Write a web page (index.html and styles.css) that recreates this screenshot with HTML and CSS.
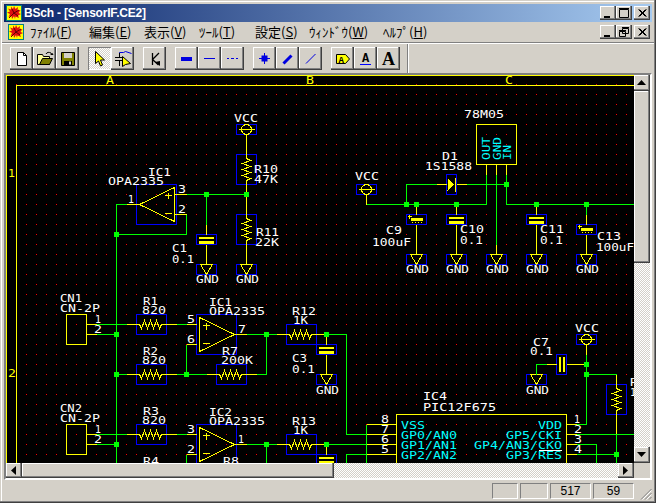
FILE: index.html
```html
<!DOCTYPE html>
<html lang="ja">
<head>
<meta charset="utf-8">
<title>BSch - [SensorIF.CE2]</title>
<link rel="stylesheet" href="styles.css">
</head>
<body>
<svg class="defs" width="0" height="0">
  <defs>
    <symbol id="leaf" viewBox="0 0 16 16">
      <rect x="0" y="0" width="16" height="16" fill="#ffff00"/>
      <rect x=".5" y=".5" width="15" height="15" fill="none" stroke="#008080"/>
      <path d="M8 1l1.500 3 2.500-2-.5 3.500 3-.5-2 3 2.500 1-3 1.500 1 2.500-3.500-1.500L9 14 8 11l-2 3-.5-3-3 1 1.500-3-3-1.500 3-1-2-3 3 1L5 1.500 7 4z" fill="#e01010"/>
      <path d="M3 13L8 8l5-3M8 8l-2-4M8 8l4 3" stroke="#600000" fill="none"/>
    </symbol>
    <g id="gnd"><rect x="-10" y="0" width="20" height="10" class="bl"/><path d="M-6 0H6L0 10Z" class="ye"/></g>
    <g id="vcc"><rect x="-10" y="0" width="20" height="10" class="bl"/><ellipse cx="0" cy="5" rx="5" ry="5" class="ye"/><path d="M-8 5H8" class="ye"/></g>
    <g id="rh"><rect x="0" y="0" width="30" height="20" class="bl"/><path d="M0 10H3L5 14 8 6 11 14 14 6 17 14 20 6 23 14 25 10H30" class="ye"/></g>
    <g id="rv"><rect x="0" y="0" width="20" height="30" class="bl"/><path d="M10 0V4L14 6 6 9 14 12 6 15 14 18 6 21 14 24 10 26V30" class="ye"/></g>
    <g id="cap"><rect x="-10" y="0" width="20" height="10" class="bl"/><rect x="-7.500" y="2" width="15" height="2.500" class="fy"/><rect x="-7.500" y="6.500" width="15" height="2.500" class="fy"/></g>
    <g id="pcap"><rect x="-10" y="0" width="20" height="10" class="bl"/><path d="M-9 2H-5M-7 0V4" class="ye"/><rect x="-5.500" y="3" width="12" height="2" class="fy"/><path d="M-6 6H6M-4 7.500V8.500M-1 7.500V8.500M2 7.500V8.500M5 7.500V8.500" class="ye"/></g>
    <g id="op"><rect x="0" y="0" width="40" height="40" class="bl"/><path d="M3 3V37L38 20Z M6 11H13M9.500 8V15M6 29H13" class="ye"/></g>
    <rect id="j" x="-2.500" y="-2.500" width="5" height="5" class="fg"/>
  </defs>
</svg>
<div class="window">
  <header class="titlebar">
    <svg class="ico16" width="16" height="16"><use href="#leaf"/></svg>
    <span class="titletext">BSch - [SensorIF.CE2]</span>
    <div class="winbtns">
      <button class="wb"><svg width="14" height="12"><path d="M3 9h6v2H3z"/></svg></button>
      <button class="wb"><svg width="14" height="12"><path d="M2.500 2.500h9v8h-9z M2 1.500h10" class="glyphline"/></svg></button>
      <button class="wb wb-close"><svg width="14" height="12"><path d="M3.500 2.500l7 7M4.500 2.500l7 7M10.500 2.500l-7 7M11.500 2.500l-7 7" class="glyphline"/></svg></button>
    </div>
  </header>
  <nav class="menubar">
    <svg class="ico16 menuicon" width="16" height="16"><use href="#leaf"/></svg>
    <span class="mi m1">ﾌｧｲﾙ(<u>F</u>)</span>
    <span class="mi m2">編集(<u>E</u>)</span>
    <span class="mi m3">表示(<u>V</u>)</span>
    <span class="mi m4">ﾂｰﾙ(<u>T</u>)</span>
    <span class="mi m5">設定(<u>S</u>)</span>
    <span class="mi m6">ｳｨﾝﾄﾞｳ(<u>W</u>)</span>
    <span class="mi m7">ﾍﾙﾌﾟ(<u>H</u>)</span>
    <div class="winbtns mdibtns">
      <button class="wb"><svg width="14" height="12"><path d="M3 9h6v2H3z"/></svg></button>
      <button class="wb"><svg width="14" height="12"><path d="M5.500 2.500h6v5h-6z M5 1.500h7 M2.500 5.500h6v5h-6z M2 4.500h7" class="glyphline"/></svg></button>
      <button class="wb wb-close"><svg width="14" height="12"><path d="M3.500 2.500l7 7M4.500 2.500l7 7M10.500 2.500l-7 7M11.500 2.500l-7 7" class="glyphline"/></svg></button>
    </div>
  </nav>
  <div class="rule"></div>
  <div class="toolbar">
    <div class="tgroup">
      <button class="tb"><svg width="16" height="16"><path d="M3.500 1.500h6l3 3v10h-9z" fill="#fff" stroke="#000"/><path d="M9.500 1.500v3h3" fill="none" stroke="#000"/></svg></button>
      <button class="tb"><svg width="18" height="16"><path d="M1.500 3.500h5l1 2h6v8h-12z" fill="#ffff99" stroke="#000"/><path d="M3.500 13.500l3-6h10l-3 6z" fill="#808000" stroke="#000"/><path d="M10 3c1-2 3-2 5-1l1 2" fill="none" stroke="#000"/><path d="M14 4h3.500l-1-2z"/></svg></button>
      <button class="tb"><svg width="16" height="16"><path d="M1.500 1.500h13v13h-13z" fill="#808000" stroke="#000"/><rect x="4" y="2" width="8" height="5" fill="#d4d0c8"/><rect x="4" y="10" width="8" height="4" fill="#000"/><rect x="9" y="10.500" width="2" height="3" fill="#d4d0c8"/></svg></button>
    </div>
    <div class="tgroup">
      <button class="tb tb-on"><svg width="16" height="18"><path d="M3.500 1.500v12l3-2.500 2 5 2-1-2-5h4z" fill="#ffff00" stroke="#000"/></svg></button>
      <button class="tb"><svg width="20" height="18"><path d="M6.500 3V2.500h4l2-1 6 2" fill="none" stroke="#0000e0"/><path d="M6.500 3v4M6.500 11v5M2 7.500h9M2 10.500h9" stroke="#000" fill="none"/><path d="M9.500 6.500v10l3-2 5-1z" fill="#ffff00" stroke="#000"/></svg></button>
    </div>
    <div class="tgroup">
      <button class="tb"><svg width="16" height="16"><path d="M5.500 2v12M12 2L5.500 8.500l6 5.500" stroke="#000" fill="none" stroke-width="1.300"/><path d="M8 11l5 4v-5z"/></svg></button>
    </div>
    <div class="tgroup">
      <button class="tb"><svg width="16" height="16"><rect x="2" y="6" width="11" height="4" fill="#0000e0"/></svg></button>
      <button class="tb"><svg width="16" height="16"><rect x="2" y="7" width="11" height="1" fill="#0000e0"/></svg></button>
      <button class="tb"><svg width="16" height="16"><path d="M2 7.500h2M6 7.500h3M11 7.500h2" stroke="#0000e0"/></svg></button>
    </div>
    <div class="tgroup">
      <button class="tb"><svg width="16" height="16"><rect x="4.500" y="4.500" width="6" height="6" fill="#0000e0"/><path d="M7.500 2v11M2 7.500h11" stroke="#0000e0"/></svg></button>
      <button class="tb"><svg width="16" height="16"><path d="M3.500 12.500L11.500 4.500" stroke="#0000e0" stroke-width="3"/></svg></button>
      <button class="tb"><svg width="16" height="16"><path d="M3 12.500L12.500 3" stroke="#0000e0"/></svg></button>
    </div>
    <div class="tgroup">
      <button class="tb"><svg width="16" height="12"><path d="M1.500 1.500h9l4 4.500-4 4.500h-9z" fill="#ffff00" stroke="#000"/><text x="3.500" y="9.500" class="iconA">A</text></svg></button>
      <button class="tb"><svg width="16" height="18"><text x="7.500" y="12" text-anchor="middle" class="iconB">A</text><rect x="2" y="14" width="11" height="1" fill="#0000ff"/></svg></button>
      <button class="tb"><svg width="16" height="16"><text x="7.500" y="14" text-anchor="middle" class="iconC">A</text></svg></button>
    </div>
    <div class="tsep"></div>
  </div>
  <main class="client">
    <div class="canvas">
      <svg class="sch" width="628" height="388" viewBox="6 75 628 388">
        <g transform="translate(.5 .5)" class="crisp">
          <path d="M634 75H6V463M634 85H16V463" class="ye"/>

          <!-- symbols -->
          <use href="#vcc" x="246" y="124"/><use href="#rv" x="236" y="154"/><use href="#rv" x="236" y="214"/>
          <use href="#gnd" x="246" y="264"/><use href="#gnd" x="206" y="264"/><use href="#cap" x="206" y="234"/>
          <rect x="136" y="184" width="40" height="40" class="bl"/>
          <path d="M174 187V221L139 204Z M164 195H171M167.500 192V198M164 213H171" class="ye"/>

          <use href="#rh" x="136" y="314"/><use href="#rh" x="136" y="364"/><use href="#rh" x="136" y="424"/>
          <use href="#rh" x="216" y="364"/><use href="#rh" x="286" y="324"/><use href="#rh" x="286" y="434"/>
          <use href="#op" x="196" y="314"/><use href="#op" x="196" y="424"/>
          <rect x="66" y="314" width="20" height="30" class="ye"/><rect x="66" y="424" width="20" height="30" class="ye"/>
          <use href="#cap" x="326" y="344"/><use href="#cap" x="326" y="454"/><use href="#gnd" x="326" y="374"/>

          <use href="#vcc" x="366" y="184"/>
          <rect x="446" y="174" width="10" height="20" class="bl"/>
          <path d="M447 178V190L454 184Z" class="fy"/><path d="M455 177V191" class="ye"/>
          <use href="#pcap" x="416" y="214"/><use href="#cap" x="456" y="214"/><use href="#cap" x="536" y="214"/><use href="#pcap" x="586" y="224"/>
          <use href="#gnd" x="416" y="254"/><use href="#gnd" x="456" y="254"/><use href="#gnd" x="496" y="254"/><use href="#gnd" x="536" y="254"/><use href="#gnd" x="586" y="254"/>
          <rect x="476" y="124" width="40" height="40" class="ye"/>

          <use href="#vcc" x="586" y="334"/>
          <rect x="556" y="354" width="10" height="20" class="bl"/>
          <rect x="558.500" y="356.500" width="2" height="15" class="fy"/><rect x="562.500" y="356.500" width="2" height="15" class="fy"/>
          <use href="#gnd" x="536" y="374"/>
          <use href="#rv" x="606" y="384"/>
          <rect x="396" y="414" width="170" height="60" class="ye"/>

          <!-- yellow pin stubs -->
          <path d="M246 134V154M246 184V194M246 194V214M246 244V264M206 224V234M206 244V264M174 194H186M174 214H186M126 204H139M86 324H96M86 334H96M126 324H136M126 374H136M166 324H176M186 324H196M186 344H196M166 374H176M206 374H216M234 334H246M276 334H286M316 334H326M326 334V344M326 354V374M86 434H96M86 444H96M126 434H136M166 434H176M186 434H196M186 454H196M234 444H246M276 444H286M316 444H326M326 444V454M366 424H396M366 434H396M366 444H396M366 454H396M566 424H576M566 434H576M566 444H576M566 454H576M586 344V354M566 364H586M546 364H556M616 374V384M616 414V434M366 194V204M436 184H446M456 184H466M486 164V174M496 164V174M506 164V174M496 244V254M416 204V214M416 224V254M456 204V214M456 224V254M536 204V214M536 224V254M586 214V224M586 234V254" class="ye"/>

          <!-- green wires -->
          <path d="M186 194H246M206 194V224M186 214V234H116M126 204H116V463M96 324H126M96 334H116M116 374H126M176 324H186M176 374H206M186 344V374M246 334H276M266 334V374H256M96 434H126M96 444H116M176 434H186M186 454V463M246 444H276M266 444V463M326 334H346V434H366M326 444H366M346 463V454H366M366 463V424M576 424H586V354M586 374H616M536 374V364H546M576 434H634M576 444H596V463M576 454H616M616 434V463M366 204H486V174M406 204V184H436M466 184H506M506 174V204H634M496 174V244M586 204V214" class="gr"/>
          <path d="M256 374H246" class="ye"/>

          <use href="#j" x="246" y="194"/><use href="#j" x="206" y="194"/><use href="#j" x="116" y="234"/>
          <use href="#j" x="116" y="334"/><use href="#j" x="116" y="374"/><use href="#j" x="116" y="444"/>
          <use href="#j" x="186" y="374"/><use href="#j" x="266" y="334"/><use href="#j" x="266" y="444"/>
          <use href="#j" x="326" y="334"/><use href="#j" x="326" y="444"/><use href="#j" x="406" y="204"/>
          <use href="#j" x="416" y="204"/><use href="#j" x="456" y="204"/><use href="#j" x="506" y="184"/>
          <use href="#j" x="536" y="204"/><use href="#j" x="586" y="204"/><use href="#j" x="586" y="364"/>
          <use href="#j" x="586" y="374"/><use href="#j" x="616" y="454"/>
          <path d="M538 450H561" class="wh"/>
        </g>

        <g class="lbl ly">
          <text x="106" y="84" textLength="8" lengthAdjust="spacingAndGlyphs">A</text>
          <text x="306" y="84" textLength="8" lengthAdjust="spacingAndGlyphs">B</text>
          <text x="505" y="84" textLength="8" lengthAdjust="spacingAndGlyphs">C</text>
          <text x="8" y="177" textLength="7" lengthAdjust="spacingAndGlyphs">1</text>
          <text x="8" y="377" textLength="8" lengthAdjust="spacingAndGlyphs">2</text>
        </g>
        <g class="lbl lw">
          <text x="234" y="122" textLength="24" lengthAdjust="spacingAndGlyphs">VCC</text>
          <text x="254" y="173" textLength="24" lengthAdjust="spacingAndGlyphs">R10</text>
          <text x="254" y="183" textLength="24" lengthAdjust="spacingAndGlyphs">47K</text>
          <text x="256" y="236" textLength="23" lengthAdjust="spacingAndGlyphs">R11</text>
          <text x="255" y="246" textLength="24" lengthAdjust="spacingAndGlyphs">22K</text>
          <text x="236" y="283" textLength="23" lengthAdjust="spacingAndGlyphs">GND</text>
          <text x="196" y="283" textLength="23" lengthAdjust="spacingAndGlyphs">GND</text>
          <text x="148" y="176" textLength="23" lengthAdjust="spacingAndGlyphs">IC1</text>
          <text x="108" y="185" textLength="56" lengthAdjust="spacingAndGlyphs">OPA2335</text>
          <text x="178" y="193" textLength="8" lengthAdjust="spacingAndGlyphs">3</text>
          <text x="178" y="213" textLength="8" lengthAdjust="spacingAndGlyphs">2</text>
          <text x="128" y="203" textLength="6" lengthAdjust="spacingAndGlyphs">1</text>
          <text x="172" y="252" textLength="15" lengthAdjust="spacingAndGlyphs">C1</text>
          <text x="172" y="263" textLength="22" lengthAdjust="spacingAndGlyphs">0.1</text>

          <text x="60" y="302" textLength="22" lengthAdjust="spacingAndGlyphs">CN1</text>
          <text x="60" y="312" textLength="40" lengthAdjust="spacingAndGlyphs">CN-2P</text>
          <text x="95" y="323" textLength="6" lengthAdjust="spacingAndGlyphs">1</text>
          <text x="94" y="333" textLength="8" lengthAdjust="spacingAndGlyphs">2</text>
          <text x="143" y="305" textLength="15" lengthAdjust="spacingAndGlyphs">R1</text>
          <text x="142" y="314" textLength="24" lengthAdjust="spacingAndGlyphs">820</text>
          <text x="143" y="355" textLength="15" lengthAdjust="spacingAndGlyphs">R2</text>
          <text x="142" y="364" textLength="24" lengthAdjust="spacingAndGlyphs">820</text>
          <text x="187" y="323" textLength="8" lengthAdjust="spacingAndGlyphs">5</text>
          <text x="187" y="343" textLength="8" lengthAdjust="spacingAndGlyphs">6</text>
          <text x="209" y="306" textLength="23" lengthAdjust="spacingAndGlyphs">IC1</text>
          <text x="209" y="315" textLength="56" lengthAdjust="spacingAndGlyphs">OPA2335</text>
          <text x="238" y="333" textLength="8" lengthAdjust="spacingAndGlyphs">7</text>
          <text x="222" y="355" textLength="16" lengthAdjust="spacingAndGlyphs">R7</text>
          <text x="221" y="364" textLength="32" lengthAdjust="spacingAndGlyphs">200K</text>
          <text x="292" y="315" textLength="24" lengthAdjust="spacingAndGlyphs">R12</text>
          <text x="293" y="324" textLength="15" lengthAdjust="spacingAndGlyphs">1K</text>
          <text x="292" y="362" textLength="15" lengthAdjust="spacingAndGlyphs">C3</text>
          <text x="292" y="373" textLength="23" lengthAdjust="spacingAndGlyphs">0.1</text>
          <text x="316" y="394" textLength="23" lengthAdjust="spacingAndGlyphs">GND</text>

          <text x="60" y="412" textLength="22" lengthAdjust="spacingAndGlyphs">CN2</text>
          <text x="60" y="422" textLength="40" lengthAdjust="spacingAndGlyphs">CN-2P</text>
          <text x="95" y="433" textLength="6" lengthAdjust="spacingAndGlyphs">1</text>
          <text x="94" y="443" textLength="8" lengthAdjust="spacingAndGlyphs">2</text>
          <text x="143" y="415" textLength="16" lengthAdjust="spacingAndGlyphs">R3</text>
          <text x="142" y="424" textLength="24" lengthAdjust="spacingAndGlyphs">820</text>
          <text x="187" y="433" textLength="8" lengthAdjust="spacingAndGlyphs">3</text>
          <text x="187" y="453" textLength="8" lengthAdjust="spacingAndGlyphs">2</text>
          <text x="209" y="416" textLength="23" lengthAdjust="spacingAndGlyphs">IC2</text>
          <text x="209" y="425" textLength="56" lengthAdjust="spacingAndGlyphs">OPA2335</text>
          <text x="238" y="443" textLength="6" lengthAdjust="spacingAndGlyphs">1</text>
          <text x="292" y="425" textLength="24" lengthAdjust="spacingAndGlyphs">R13</text>
          <text x="293" y="434" textLength="15" lengthAdjust="spacingAndGlyphs">1K</text>
          <text x="143" y="465" textLength="16" lengthAdjust="spacingAndGlyphs">R4</text>
          <text x="223" y="465" textLength="16" lengthAdjust="spacingAndGlyphs">R8</text>

          <text x="464" y="118" textLength="40" lengthAdjust="spacingAndGlyphs">78M05</text>
          <text x="442" y="160" textLength="16" lengthAdjust="spacingAndGlyphs">D1</text>
          <text x="425" y="170" textLength="47" lengthAdjust="spacingAndGlyphs">1S1588</text>
          <text x="355" y="180" textLength="24" lengthAdjust="spacingAndGlyphs">VCC</text>
          <text x="386" y="234" textLength="16" lengthAdjust="spacingAndGlyphs">C9</text>
          <text x="372" y="246" textLength="39" lengthAdjust="spacingAndGlyphs">100uF</text>
          <text x="460" y="233" textLength="24" lengthAdjust="spacingAndGlyphs">C10</text>
          <text x="460" y="244" textLength="23" lengthAdjust="spacingAndGlyphs">0.1</text>
          <text x="540" y="233" textLength="24" lengthAdjust="spacingAndGlyphs">C11</text>
          <text x="540" y="244" textLength="23" lengthAdjust="spacingAndGlyphs">0.1</text>
          <text x="597" y="240" textLength="24" lengthAdjust="spacingAndGlyphs">C13</text>
          <text x="596" y="251" textLength="38" lengthAdjust="spacingAndGlyphs">100uF</text>
          <text x="406" y="273" textLength="23" lengthAdjust="spacingAndGlyphs">GND</text>
          <text x="446" y="273" textLength="23" lengthAdjust="spacingAndGlyphs">GND</text>
          <text x="486" y="273" textLength="23" lengthAdjust="spacingAndGlyphs">GND</text>
          <text x="526" y="273" textLength="23" lengthAdjust="spacingAndGlyphs">GND</text>
          <text x="576" y="273" textLength="23" lengthAdjust="spacingAndGlyphs">GND</text>

          <text x="575" y="332" textLength="24" lengthAdjust="spacingAndGlyphs">VCC</text>
          <text x="533" y="346" textLength="16" lengthAdjust="spacingAndGlyphs">C7</text>
          <text x="530" y="355" textLength="23" lengthAdjust="spacingAndGlyphs">0.1</text>
          <text x="526" y="394" textLength="23" lengthAdjust="spacingAndGlyphs">GND</text>
          <text x="630" y="386" textLength="8" lengthAdjust="spacingAndGlyphs">R</text>
          <text x="630" y="396" textLength="6" lengthAdjust="spacingAndGlyphs">1</text>

          <text x="423" y="400" textLength="24" lengthAdjust="spacingAndGlyphs">IC4</text>
          <text x="423" y="411" textLength="73" lengthAdjust="spacingAndGlyphs">PIC12F675</text>
          <text x="381" y="423" textLength="8" lengthAdjust="spacingAndGlyphs">8</text>
          <text x="381" y="433" textLength="8" lengthAdjust="spacingAndGlyphs">7</text>
          <text x="381" y="443" textLength="8" lengthAdjust="spacingAndGlyphs">6</text>
          <text x="381" y="453" textLength="8" lengthAdjust="spacingAndGlyphs">5</text>
          <text x="574" y="423" textLength="6" lengthAdjust="spacingAndGlyphs">1</text>
          <text x="574" y="433" textLength="8" lengthAdjust="spacingAndGlyphs">2</text>
          <text x="574" y="443" textLength="8" lengthAdjust="spacingAndGlyphs">3</text>
          <text x="574" y="453" textLength="8" lengthAdjust="spacingAndGlyphs">4</text>
        </g>
        <g class="lbl lc">
          <text x="401" y="429" textLength="24" lengthAdjust="spacingAndGlyphs">VSS</text>
          <text x="401" y="439" textLength="56" lengthAdjust="spacingAndGlyphs">GP0/AN0</text>
          <text x="401" y="449" textLength="56" lengthAdjust="spacingAndGlyphs">GP1/AN1</text>
          <text x="401" y="459" textLength="56" lengthAdjust="spacingAndGlyphs">GP2/AN2</text>
          <text x="538" y="429" textLength="24" lengthAdjust="spacingAndGlyphs">VDD</text>
          <text x="506" y="439" textLength="56" lengthAdjust="spacingAndGlyphs">GP5/CKI</text>
          <text x="474" y="449" textLength="88" lengthAdjust="spacingAndGlyphs">GP4/AN3/CKO</text>
          <text x="506" y="459" textLength="56" lengthAdjust="spacingAndGlyphs">GP3/RES</text>
          <text transform="translate(490 160) rotate(-90)" textLength="23" lengthAdjust="spacingAndGlyphs">OUT</text>
          <text transform="translate(500.500 160) rotate(-90)" textLength="23" lengthAdjust="spacingAndGlyphs">GND</text>
          <text transform="translate(510.500 160) rotate(-90)" textLength="15" lengthAdjust="spacingAndGlyphs">IN</text>
        </g>
      </svg>
    </div>
    <div class="vscroll">
      <button class="sb"><svg width="10" height="6"><path d="M0 5h9L4.500 0z"/></svg></button>
      <div class="vthumb"></div>
      <div class="track"></div>
      <button class="sb"><svg width="10" height="6"><path d="M0 0h9L4.500 5z"/></svg></button>
    </div>
    <div class="hscroll">
      <button class="sb sb-h"><svg width="6" height="10"><path d="M5 0v9L0 4.500z"/></svg></button>
      <div class="hthumb"></div>
      <div class="track"></div>
      <button class="sb sb-h"><svg width="6" height="10"><path d="M0 0v9L5 4.500z"/></svg></button>
    </div>
    <div class="corner"></div>
  </main>
  <footer class="statusbar">
    <div class="panel p1"></div>
    <div class="panel p2"></div>
    <div class="panel p3">517</div>
    <div class="panel p4">59</div>
    <svg class="grip" width="12" height="12"><path d="M11.500 1L1 11.500M11.500 5L5 11.500M11.500 9L9 11.500" stroke="#808080" fill="none"/><path d="M11.500 2.500L2.500 11.500M11.500 6.500L6.500 11.500" stroke="#fff" fill="none"/></svg>
  </footer>
</div>
</body>
</html>
```
FILE: styles.css
```css
* { box-sizing: border-box; }
html, body { margin: 0; padding: 0; background: #d4d0c8; overflow: hidden; }
button { padding: 0; margin: 0; font: inherit; }
.defs { position: absolute; }

.window {
  width: 656px; height: 503px;
  display: flex; flex-direction: column;
  padding: 4px 4px 2px;
  background: #d4d0c8;
  box-shadow: inset -1px -1px 0 #404040, inset -2px -2px 0 #808080, inset 1px 1px 0 #d4d0c8, inset 2px 2px 0 #fff;
  font-family: "Liberation Sans", sans-serif;
  color: #000;
}

.titlebar {
  height: 18px; flex: none;
  display: flex; align-items: center;
  padding-left: 2px;
  background: linear-gradient(90deg, #0a246a, #a6caf0);
}
.ico16 { display: block; flex: none; }
.titletext {
  margin-left: 2px;
  color: #fff; font: bold 12px "Liberation Sans", sans-serif;
  letter-spacing: -0.2px;
  white-space: nowrap;
}
.winbtns { margin-left: auto; display: flex; margin-right: 2px; }
.mdibtns { margin-right: 2px; }
.wb {
  width: 16px; height: 14px;
  display: flex; align-items: center; justify-content: center;
  background: #d4d0c8; border: 0;
  box-shadow: inset -1px -1px 0 #404040, inset -2px -2px 0 #808080, inset 1px 1px 0 #fff;
}
.wb-close { margin-left: 2px; }
.glyphline { fill: none; stroke: #000; }

.menubar {
  height: 20px; flex: none;
  display: flex; align-items: center;
  font: 13px "Noto Sans CJK JP", sans-serif;
  white-space: nowrap;
}
.menuicon { margin-left: 4px; margin-right: 6px; }
.mi { display: block; line-height: 20px; }
.m1 { width: 59px; }
.m2 { width: 55px; }
.m3 { width: 55px; }
.m4 { width: 56px; }
.m5 { width: 54px; }
.m6 { width: 74px; }
.m7 { width: 60px; }

.rule { height: 2px; flex: none; margin: 0 -2px; border-top: 1px solid #808080; border-bottom: 1px solid #fff; }

.toolbar {
  height: 29px; flex: none;
  display: flex; align-items: flex-start;
  padding: 3px 0 0 6px;
  gap: 9px;
}
.tgroup { display: flex; }
.tb {
  width: 23px; height: 23px;
  display: flex; align-items: center; justify-content: center;
  border: 0; background: #d4d0c8;
  box-shadow: inset -1px -1px 0 #404040, inset -2px -2px 0 #808080, inset 1px 1px 0 #fff;
}
.tb-on {
  background: repeating-conic-gradient(#fff 0 25%, #d4d0c8 0 50%) 0 0 / 2px 2px;
  box-shadow: inset 1px 1px 0 #808080, inset -1px -1px 0 #fff;
}
.tsep { width: 2px; height: 29px; margin-top: -3px; margin-left: -2px; border-left: 1px solid #808080; border-right: 1px solid #fff; }
.iconA { font: bold 9px "Liberation Mono", monospace; }
.iconB { font: bold 12px "Liberation Mono", monospace; fill: #000; }
.iconC { font: bold 18px "Liberation Serif", serif; }

.client {
  height: 407px; flex: none;
  display: grid;
  grid-template-columns: 628px 16px;
  grid-template-rows: 388px 15px;
  border: 2px solid;
  border-color: #808080 #fff #fff #808080;
  box-shadow: inset 1px 1px 0 #404040;
}
.canvas {
  overflow: hidden;
  background-color: #ff0000;
  background-image:
    linear-gradient(90deg, transparent 1px, #000 1px),
    linear-gradient(180deg, transparent 1px, #000 1px);
  background-size: 10px 10px;
  background-position: 0 9px;
}
.sch { display: block; }
.crisp { shape-rendering: crispEdges; }
.crisp ellipse { shape-rendering: auto; }
.bl { fill: none; stroke: #0000ff; }
.ye { fill: none; stroke: #ffff00; }
.gr { fill: none; stroke: #00ff00; }
.wh { fill: none; stroke: #fff; }
.fy { fill: #ffff00; }
.fg { fill: #00ff00; }
.lbl { font: 10px "DejaVu Sans Mono", monospace; }
.ly { fill: #ffff00; }
.lw { fill: #fff; }
.lc { fill: #00ffff; }

.vscroll { display: flex; flex-direction: column; width: 16px; height: 388px; }
.hscroll { display: flex; height: 15px; width: 628px; }
.sb {
  flex: none; width: 16px; height: 16px;
  display: flex; align-items: center; justify-content: center;
  border: 0; background: #d4d0c8;
  box-shadow: inset -1px -1px 0 #404040, inset -2px -2px 0 #808080, inset 1px 1px 0 #fff;
}
.sb-h { height: 15px; }
.track { flex: 1; background: repeating-conic-gradient(#fff 0 25%, #d4d0c8 0 50%) 0 0 / 2px 2px; }
.vthumb, .hthumb {
  flex: none; background: #d4d0c8;
  box-shadow: inset -1px -1px 0 #404040, inset -2px -2px 0 #808080, inset 1px 1px 0 #fff;
}
.vthumb { height: 172px; }
.hthumb { width: 312px; }
.corner { background: #d4d0c8; }

.statusbar {
  flex: 1; min-height: 0;
  display: flex; align-items: flex-start;
  padding-top: 3px; padding-left: 488px;
  font-size: 12px;
  position: relative;
}
.panel {
  height: 16px; line-height: 15px;
  text-align: center;
  border: 1px solid; border-color: #808080 #fff #fff #808080;
}
.p1 { width: 26px; margin-right: 2px; }
.p2 { width: 28px; margin-right: 2px; }
.p3 { width: 41px; margin-right: 2px; }
.p4 { width: 41px; }
.grip { position: absolute; right: 0; bottom: 1px; }
```
